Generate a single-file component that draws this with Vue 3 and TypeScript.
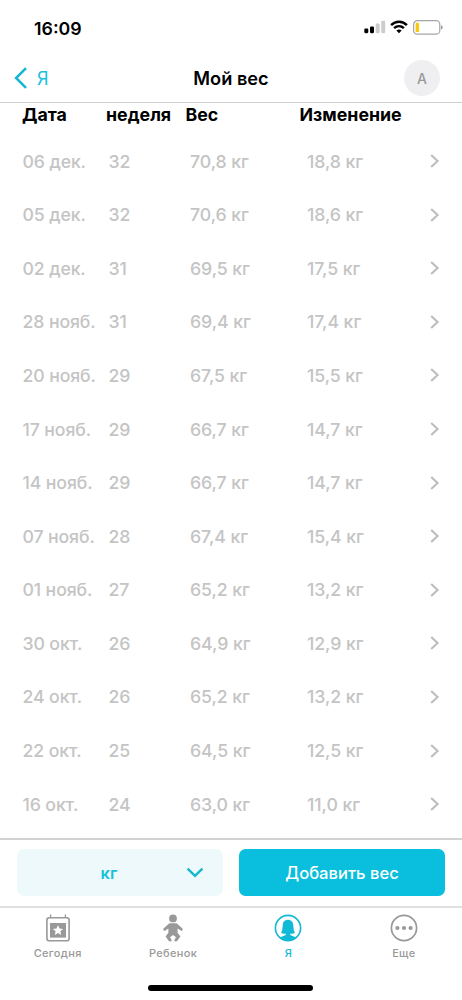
<script setup lang="ts">
interface Entry {
  date: string
  week: number
  weight: string
  change: string
}

const entries: Entry[] = [
  { date: '06 дек.', week: 32, weight: '70,8 кг', change: '18,8 кг' },
  { date: '05 дек.', week: 32, weight: '70,6 кг', change: '18,6 кг' },
  { date: '02 дек.', week: 31, weight: '69,5 кг', change: '17,5 кг' },
  { date: '28 нояб.', week: 31, weight: '69,4 кг', change: '17,4 кг' },
  { date: '20 нояб.', week: 29, weight: '67,5 кг', change: '15,5 кг' },
  { date: '17 нояб.', week: 29, weight: '66,7 кг', change: '14,7 кг' },
  { date: '14 нояб.', week: 29, weight: '66,7 кг', change: '14,7 кг' },
  { date: '07 нояб.', week: 28, weight: '67,4 кг', change: '15,4 кг' },
  { date: '01 нояб.', week: 27, weight: '65,2 кг', change: '13,2 кг' },
  { date: '30 окт.', week: 26, weight: '64,9 кг', change: '12,9 кг' },
  { date: '24 окт.', week: 26, weight: '65,2 кг', change: '13,2 кг' },
  { date: '22 окт.', week: 25, weight: '64,5 кг', change: '12,5 кг' },
  { date: '16 окт.', week: 24, weight: '63,0 кг', change: '11,0 кг' },
]
</script>

<template>
  <div class="screen">
    <header class="status">
      <span class="clock">16:09</span>
      <div class="indicators">
        <svg width="22" height="14" viewBox="0 0 22 14">
          <rect x="0.3" y="8.6" width="4" height="4.6" rx="1.1" fill="#000" />
          <rect x="6" y="6.6" width="4" height="6.6" rx="1.1" fill="#000" />
          <rect x="11.7" y="3.6" width="4" height="9.6" rx="1.1" fill="#ccc" />
          <rect x="17.2" y="0.7" width="4" height="12.5" rx="1.1" fill="#ccc" />
        </svg>
        <svg class="wifi" width="18" height="14" viewBox="0 0 18 14" fill="none" stroke="#000">
          <path d="M1.1 5.1C5.5 0.5 12.5 0.5 16.9 5.1" stroke-width="2.5" />
          <path d="M4.1 8.2C6.9 5.4 11.1 5.4 13.9 8.2" stroke-width="2.4" />
          <path d="M6.4 10.6Q9 8.2 11.6 10.6L9 13.3Z" fill="#000" stroke="none" />
        </svg>
        <svg class="battery" width="31" height="15" viewBox="0 0 31 15">
          <rect x="0.6" y="0.6" width="26.2" height="13.6" rx="3.8" fill="#fff" stroke="#a5a5a5" stroke-width="1.2" />
          <rect x="2.6" y="2.7" width="3.4" height="9.4" rx="1.2" fill="#f9c90c" />
          <path d="M28 5.2Q29.8 5.8 29.8 7.4T28 9.6Z" fill="#a0a0a0" />
        </svg>
      </div>
    </header>

    <nav class="topbar">
      <div class="back">
        <svg width="14" height="22" viewBox="0 0 14 22" fill="none" stroke="#14b6d4" stroke-width="2.5">
          <path d="M12 1.2L2.1 11L12 20.8" />
        </svg>
        <span>Я</span>
      </div>
      <h1>Мой вес</h1>
      <div class="avatar">А</div>
    </nav>

    <main class="log">
      <div class="line head">
        <span>Дата</span><span class="week">неделя</span><span class="weight">Вес</span><span class="change">Изменение</span>
      </div>
      <div v-for="entry in entries" :key="entry.date" class="line entry">
        <span>{{ entry.date }}</span>
        <span class="week">{{ entry.week }}</span>
        <span class="weight">{{ entry.weight }}</span>
        <span class="change">{{ entry.change }}</span>
        <svg width="10" height="16" viewBox="0 0 10 16" fill="none" stroke="#bdbdbd" stroke-width="2.1">
          <path d="M1.2 1.9L7.6 8L1.2 14.1" />
        </svg>
      </div>
    </main>

    <section class="actions">
      <div class="unit">
        <span>кг</span>
        <svg width="18" height="11" viewBox="0 0 18 11" fill="none" stroke="#14b6d0" stroke-width="2.4">
          <path d="M1.6 1.6L9 8.8L16.4 1.6" />
        </svg>
      </div>
      <button class="add" type="button">Добавить вес</button>
    </section>

    <footer class="tabs">
      <div class="tab">
        <svg width="28" height="28" viewBox="0 0 28 28">
          <rect x="2.9" y="3.8" width="22.2" height="23" rx="2.3" fill="none" stroke="#999" stroke-width="1.6" />
          <path d="M6.6 0.5V4M21.4 0.5V4" stroke="#999" stroke-width="1.3" />
          <rect x="6" y="9" width="16" height="14.6" fill="#999" />
          <path d="M14 11.2L15.5 14.6L19.1 14.9L16.4 17.3L17.2 20.9L14 19L10.8 20.9L11.6 17.3L8.9 14.9L12.5 14.6Z" fill="#fff" />
        </svg>
        <span>Сегодня</span>
      </div>
      <div class="tab">
        <svg width="28" height="28" viewBox="0 0 28 28" fill="#999">
          <circle cx="14" cy="4.4" r="3.9" />
          <path d="M10.4 9.3H17.6L23.5 14.4Q24.3 16.2 22.6 17L18.6 14.6V18.7L21.4 22.4L18.2 27Q16.5 28 15.1 26.5L17 23.2L14 20.9L11 23.2L12.9 26.5Q11.5 28 9.8 27L6.6 22.4L9.4 18.7V14.6L5.4 17Q3.7 16.2 4.5 14.4Z" />
        </svg>
        <span>Ребенок</span>
      </div>
      <div class="tab active">
        <svg width="28" height="28" viewBox="0 0 28 28">
          <circle cx="14" cy="14" r="12.6" fill="#fff" stroke="#10bad6" stroke-width="1.6" />
          <path d="M10.7 6.7Q14 5 17.2 6.7Q18.8 7.6 19.2 10.5L19.8 16.5L21 18.7Q18.8 20.3 16.3 19.5V21L22.2 23.5A12.6 12.6 0 0 1 5.8 23.5L11.7 21V19.5Q9.2 20.3 7 18.7L8.2 16.5L8.8 10.5Q9.1 7.5 10.7 6.7Z" fill="#10bad6" />
        </svg>
        <span>Я</span>
      </div>
      <div class="tab">
        <svg width="28" height="28" viewBox="0 0 28 28">
          <circle cx="14" cy="14" r="12.6" fill="none" stroke="#999" stroke-width="1.7" />
          <g fill="#999"><circle cx="7.4" cy="14" r="2.1" /><circle cx="14" cy="14" r="2.1" /><circle cx="20.6" cy="14" r="2.1" /></g>
        </svg>
        <span>Еще</span>
      </div>
    </footer>
    <div class="home"></div>
  </div>
</template>

<style>
body {
  background: #fff;
}
</style>

<style scoped>
.screen {
  box-sizing: border-box;
  width: 462px;
  height: 1000px;
  overflow: hidden;
  display: flex;
  flex-direction: column;
  background: #fff;
  color: #000;
  font-family: Inter, "Noto Sans", sans-serif;
}
.screen svg {
  display: block;
  flex: none;
}
.status {
  display: flex;
  flex: none;
  justify-content: space-between;
  height: 54px;
  padding: 17px 18px 0 34px;
  box-sizing: border-box;
}
.clock {
  font-size: 17.8px;
  line-height: 23px;
  font-weight: 600;
}
.indicators {
  display: flex;
  height: 22px;
  padding-top: 3px;
  box-sizing: border-box;
}
.wifi {
  margin-left: 4px;
}
.battery {
  margin-left: 5px;
}
.topbar {
  display: grid;
  flex: none;
  grid-template-columns: 1fr auto 1fr;
  align-items: center;
  box-sizing: border-box;
  height: 49px;
  padding: 0 22px 0 14px;
  border-bottom: 1px solid #cfcfcf;
}
.back {
  display: flex;
  align-items: center;
  gap: 9px;
  color: #20bfdb;
  font-size: 18px;
}
h1 {
  margin: 0 0 0 8px;
  font-size: 18.2px;
  font-weight: 600;
}
.avatar {
  justify-self: end;
  width: 36px;
  height: 36px;
  border-radius: 50%;
  background: #efeff1;
  color: #999;
  font-size: 14px;
  font-weight: 500;
  line-height: 37px;
  text-align: center;
}
.log {
  flex: none;
  height: 735px;
}
.line {
  display: grid;
  grid-template-columns: 84px 79px 114px 1fr 10px;
  align-items: center;
  padding: 0 22px;
  white-space: nowrap;
}
.head {
  height: 23px;
  margin-bottom: 8.4px;
  font-size: 17.8px;
  font-weight: 700;
}
.head .weight,
.head .change {
  padding-left: 0.5px;
}
.entry {
  height: 53.58px;
  color: #c4c4c4;
  font-size: 17.7px;
  font-weight: 450;
  letter-spacing: -0.06px;
}
.entry span:first-child {
  padding-left: 0.5px;
  letter-spacing: -0.12px;
}
.entry .week {
  padding-left: 2.5px;
}
.entry .weight {
  padding-left: 5px;
}
.entry .change {
  padding-left: 8px;
}
.actions {
  display: grid;
  flex: none;
  grid-template-columns: 206px 206px;
  gap: 16.5px;
  box-sizing: border-box;
  height: 68px;
  padding: 9px 16.5px 10px;
  border-top: 2px solid #d2d2d2;
}
.unit {
  display: grid;
  grid-template-columns: 1fr 18px;
  align-items: center;
  box-sizing: border-box;
  padding: 0 19px 0 20px;
  border-radius: 8px;
  background: #edf9fa;
  color: #17c2d8;
  font-size: 16.5px;
  font-weight: 600;
  text-align: center;
}
.unit span {
  padding-right: 4px;
  padding-top: 1px;
}
.unit svg {
  margin-bottom: 1px;
}
.add {
  border: 0;
  padding: 1px 0 0;
  border-radius: 6.5px;
  background: #0abedd;
  color: #fff;
  font-family: inherit;
  font-size: 16.6px;
  font-weight: 550;
}
.tabs {
  display: grid;
  flex: none;
  grid-template-columns: repeat(4, 115.4px);
  box-sizing: border-box;
  height: 79px;
  padding-top: 6.4px;
  border-top: 2px solid #e0e0e0;
}
.tab {
  display: flex;
  flex-direction: column;
  align-items: center;
  color: #999;
  font-size: 11px;
  font-weight: 450;
  line-height: 14px;
  letter-spacing: 0.35px;
}
.tab span {
  margin-top: 4.1px;
}
.tab.active {
  color: #10bad6;
  font-weight: 550;
}
.home {
  flex: none;
  width: 165px;
  height: 6px;
  margin-left: 148px;
  border-radius: 3px;
  background: #000;
}
</style>
